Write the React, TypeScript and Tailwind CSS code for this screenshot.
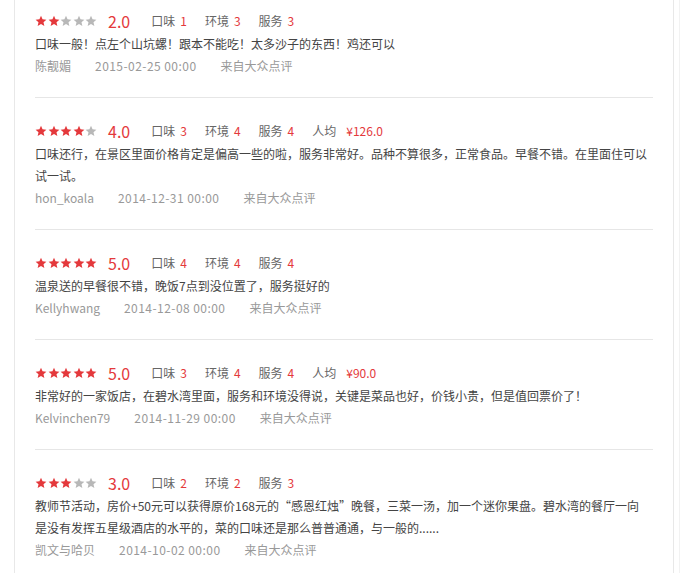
import React from "react";

type Review = {
  stars: number;
  scores: [string, string][];
  price?: string;
  text: string;
  user: string;
  date: string;
};

const reviews: Review[] = [
  {
    stars: 2,
    scores: [["口味", "1"], ["环境", "3"], ["服务", "3"]],
    text: "口味一般！点左个山坑螺！跟本不能吃！太多沙子的东西！鸡还可以",
    user: "陈靓媚",
    date: "2015-02-25 00:00",
  },
  {
    stars: 4,
    scores: [["口味", "3"], ["环境", "4"], ["服务", "4"]],
    price: "¥126.0",
    text: "口味还行，在景区里面价格肯定是偏高一些的啦，服务非常好。品种不算很多，正常食品。早餐不错。在里面住可以试一试。",
    user: "hon_koala",
    date: "2014-12-31 00:00",
  },
  {
    stars: 5,
    scores: [["口味", "4"], ["环境", "4"], ["服务", "4"]],
    text: "温泉送的早餐很不错，晚饭7点到没位置了，服务挺好的",
    user: "Kellyhwang",
    date: "2014-12-08 00:00",
  },
  {
    stars: 5,
    scores: [["口味", "3"], ["环境", "4"], ["服务", "4"]],
    price: "¥90.0",
    text: "非常好的一家饭店，在碧水湾里面，服务和环境没得说，关键是菜品也好，价钱小贵，但是值回票价了！",
    user: "Kelvinchen79",
    date: "2014-11-29 00:00",
  },
  {
    stars: 3,
    scores: [["口味", "2"], ["环境", "2"], ["服务", "3"]],
    text: "教师节活动，房价+50元可以获得原价168元的“感恩红烛”晚餐，三菜一汤，加一个迷你果盘。碧水湾的餐厅一向是没有发挥五星级酒店的水平的，菜的口味还是那么普普通通，与一般的......",
    user: "凯文与哈贝",
    date: "2014-10-02 00:00",
  },
];

function Star({ on }: { on: boolean }) {
  return (
    <svg width="12" height="12" viewBox="0 0 24 24" className="block">
      <polygon
        points="12,1.5 15.1,8.6 22.8,9.3 17,14.4 18.7,22 12,18 5.3,22 7,14.4 1.2,9.3 8.9,8.6"
        fill={on ? "#e4393c" : "#b8b8b8"}
      />
    </svg>
  );
}

export default function App() {
  return (
    <div
      className="min-h-[573px] w-[680px] border-r border-[#f2f2f2] bg-white pl-[14px] text-[12px]"
      style={{ fontFamily: '"Noto Sans CJK SC", "Noto Sans", sans-serif' }}
    >
      <div className="min-h-[573px] w-[660px] border-x border-[#e8e8e8] pl-[20px] pr-[20px]">
        {reviews.map((r, i) => (
          <div
            key={i}
            className={`${i === 0 ? "pt-[8px]" : "pt-[20px]"} pb-[20px] ${
              i < reviews.length - 1 ? "border-b border-[#e6e6e6]" : ""
            }`}
          >
            <div className="flex h-[25px] items-center">
              <div className="flex gap-[0.5px]">
                {[0, 1, 2, 3, 4].map((k) => (
                  <Star key={k} on={k < r.stars} />
                ))}
              </div>
              <span className="ml-[11px] text-[16px] leading-[24px] text-[#e4393c]">
                {r.stars}.0
              </span>
              <div className="ml-[21px] flex gap-[18px] text-[#666]">
                {r.scores.map(([k, v]) => (
                  <span key={k}>
                    {k}
                    <span className="ml-[5px] text-[#e4393c]">{v}</span>
                  </span>
                ))}
                {r.price && (
                  <span>
                    人均
                    <span className="ml-[10px] text-[#e4393c]">{r.price}</span>
                  </span>
                )}
              </div>
            </div>
            <p className="w-[614px] leading-[22px] text-[#444]">{r.text}</p>
            <div className="flex gap-[24px] leading-[22px] text-[#999]">
              <span>{r.user}</span>
              <span className="tracking-[0.45px]">{r.date}</span>
              <span>来自大众点评</span>
            </div>
          </div>
        ))}
      </div>
    </div>
  );
}
